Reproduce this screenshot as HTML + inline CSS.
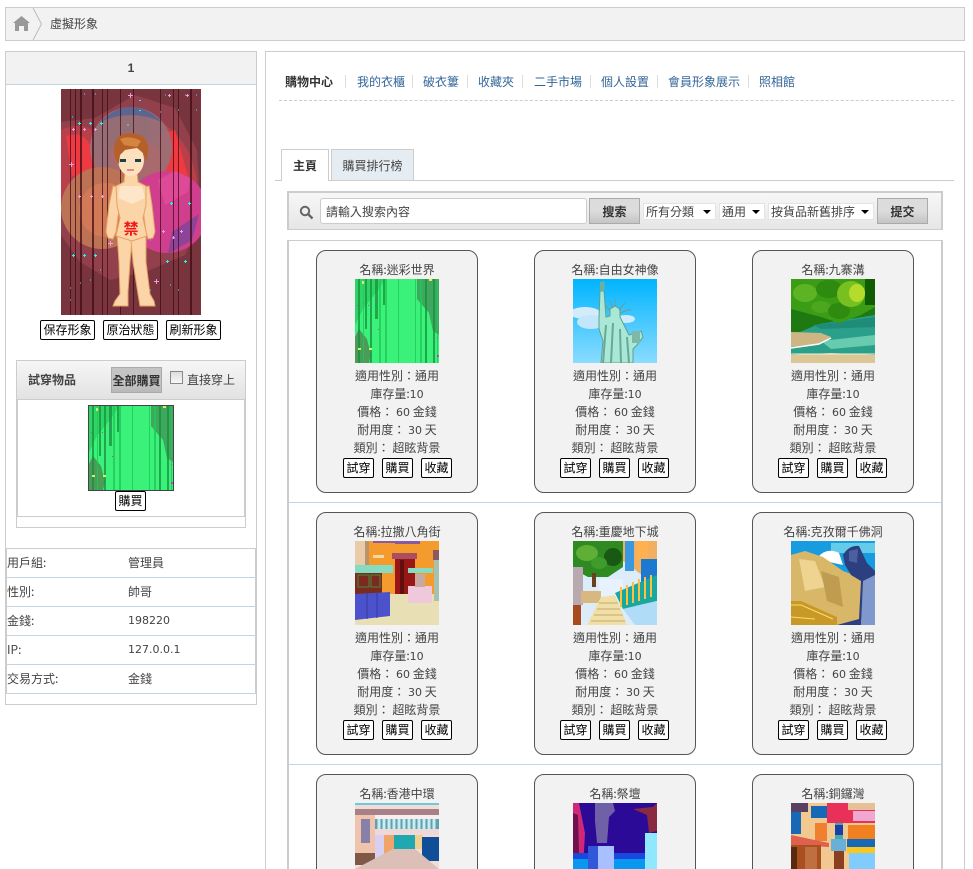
<!DOCTYPE html>
<html lang="zh-Hant">
<head>
<meta charset="utf-8">
<title>虛擬形象</title>
<style>
*{box-sizing:border-box}
html,body{margin:0;padding:0;width:973px;height:869px;overflow:hidden;background:#fff}
body{position:relative;font:12px/18px "WenQuanYi Zen Hei","Noto Sans CJK TC",sans-serif;color:#444}
.a{position:absolute}
.n{font:11px "DejaVu Sans",sans-serif}
.btn{position:absolute;height:20px;border:1px solid #000;border-radius:2px;background:#fff;color:#000;padding:0;margin:0;font:12px/18px "WenQuanYi Zen Hei","Noto Sans CJK TC",sans-serif;text-align:center;white-space:nowrap}
.gbtn{position:absolute;border:1px solid #aaa;background:linear-gradient(#dcdcdc 0,#dcdcdc 50%,#c4c4c4 100%);color:#333;font:bold 12px/23px "WenQuanYi Zen Hei","Noto Sans CJK TC",sans-serif;text-align:center;padding:0;margin:0;white-space:nowrap}
.card{position:absolute;width:162px;height:243px;border:1px solid #555;border-radius:10px;background:#f2f2f2;text-align:center;overflow:hidden}
.card .t{position:absolute;left:0;width:160px;top:10px}
.card svg{position:absolute;left:38px;top:28px;width:84px;height:84px}
.card .i{position:absolute;left:0;width:160px;top:116px}
.card .i div{height:18px}
.b1{left:26px;top:207px;width:31px}
.b2{left:65px;top:207px;width:31px}
.b3{left:104px;top:207px;width:31px}
.m .b1{left:25px}
.m .b2{left:64px}
.m .b3{left:103px}
.row{position:absolute;left:6px;width:250px;height:29px;border-bottom:1px solid #c2d5e3;line-height:28px;padding-left:1px}
.row b{position:absolute;left:122px;top:0;font-weight:normal}
.nv{position:absolute;top:73px;color:#369;white-space:nowrap}
.sep{position:absolute;top:75px;width:1px;height:13px;background:#ddd}
.sel{position:absolute;top:203px;height:17px;background:#fff;border:1px solid #e4e4e4;line-height:15px;padding-left:2px;white-space:nowrap;color:#444}
.sel i{position:absolute;right:4px;top:6px;border:4px solid transparent;border-top:4px solid #000;border-bottom:0}
.hl{position:absolute;left:289px;width:652px;height:1px;background:#c2d5e3}
</style>
</head>
<body>
<svg width="0" height="0" style="position:absolute">
<defs>
<symbol id="green" viewBox="0 0 84 84" preserveAspectRatio="none">
<rect width="84" height="84" fill="#3af27a"/>
<polygon points="62,0 84,0 84,56 78,52 74,34 62,20" fill="#3fa85e"/>
<polygon points="4,50 12,60 16,76 14,84 0,84 0,58" fill="#4a9c58"/>
<polygon points="0,0 30,0 24,10 8,30 0,46" fill="#30d466"/>
<g fill="#15903c" opacity=".75"><rect x="3" width="2" height="84"/><rect x="10" width="2" height="50"/><rect x="15" width="2" height="84"/><rect x="20" width="3" height="40"/><rect x="28" width="2" height="26"/><rect x="70" width="2" height="84"/><rect x="78" width="2" height="84"/></g>
<g fill="#22c856" opacity=".8"><rect x="8" width="1" height="84"/><rect x="24" width="2" height="84"/><rect x="30" width="2" height="84"/><rect x="43" width="1" height="84"/><rect x="60" width="1" height="84"/><rect x="65" width="2" height="84"/><rect x="82" width="1" height="84"/></g>
<g fill="#c83ac8"><rect x="2" y="26" width="1" height="1"/><rect x="13" y="26" width="1" height="1"/><rect x="16" y="45" width="1" height="1"/><rect x="22" y="20" width="1" height="2"/><rect x="15" y="53" width="1" height="1"/><rect x="2" y="56" width="1" height="1"/><rect x="23" y="50" width="1" height="1"/><rect x="82" y="76" width="2" height="2"/><rect x="82" y="52" width="1" height="1"/><rect x="82" y="58" width="1" height="1"/></g>
<g fill="#d8f060"><rect x="7" y="2" width="2" height="3"/><rect x="74" y="0" width="3" height="2"/><rect x="3" y="69" width="3" height="2"/><rect x="14" y="69" width="3" height="2"/></g>
</symbol>
</defs>
</svg>

<!-- breadcrumb -->
<div class="a" style="left:5px;top:7px;width:960px;height:34px;background:#f2f2f2;border:1px solid #ccc"></div>
<svg class="a" style="left:6px;top:8px" width="40" height="32" viewBox="0 0 40 32">
<path d="M7 15 L15.5 8 L24 15 L22 15 L22 23 L18 23 L18 18 L13 18 L13 23 L9 23 L9 15Z" fill="#999"/>
<path d="M27 0 L35.5 16 L27 32" fill="#f2f2f2" stroke="#bbb" stroke-width="1"/>
</svg>
<div class="a" style="left:50px;top:15px;color:#444">虛擬形象</div>

<!-- left panel -->
<div class="a" style="left:5px;top:51px;width:252px;height:654px;border:1px solid #ccc"></div>
<div class="a" style="left:6px;top:52px;width:250px;height:33px;background:#f2f2f2;border-bottom:1px solid #c2d5e3;text-align:center;font:bold 12px/33px 'Liberation Sans',sans-serif">1</div>

<!-- avatar -->
<svg class="a" style="left:61px;top:89px" width="140" height="226" viewBox="61 89 140 226">
<rect x="61" y="89" width="140" height="226" fill="#78353e"/>
<path d="M61 122 L95 118 L135 95 L175 108 L197 150 L201 220 L185 255 L150 270 L110 280 L80 262 L61 235Z" fill="#92414c"/>
<path d="M61 130 Q88 118 100 140 L104 175 L90 190 L61 200Z" fill="#b8404a"/>
<path d="M66 136 Q86 130 92 150 L92 178 L72 176 Z" fill="#ee3a42"/>
<path d="M150 118 Q188 130 197 180 L190 220 L165 205 L150 170Z" fill="#bb3f48"/>
<path d="M158 135 L175 130 L192 190 L175 195 L162 170Z" fill="#ee3a40"/>
<circle cx="131" cy="148" r="41" fill="#96727a" fill-opacity=".9"/>
<path d="M100 122 Q131 92 162 122 Q131 108 100 122Z" fill="#5c6490"/>
<path d="M110 150 Q131 125 160 150 L160 175 L110 180Z" fill="#a86a6c"/>
<circle cx="102" cy="208" r="41" fill="#bc7254"/>
<circle cx="106" cy="210" r="27" fill="#d27a58"/>
<circle cx="167" cy="212" r="41" fill="#cf3f8e"/>
<path d="M172 232 L199 214 L192 240 L168 254Z" fill="#8c4398"/>
<path d="M158 180 L175 171 L190 178 L188 192 L165 205Z" fill="#de4a98"/>
<g fill="#3f0a12" opacity=".72"><rect x="70" y="89" width="1" height="226"/><rect x="75" y="89" width="1" height="226"/><rect x="80" y="89" width="2" height="226"/><rect x="92" y="89" width="2" height="226"/><rect x="102" y="89" width="1" height="226"/><rect x="107" y="89" width="1" height="226"/><rect x="120" y="89" width="1" height="226"/><rect x="133" y="89" width="1" height="226"/><rect x="160" y="89" width="1" height="226"/><rect x="173" y="89" width="1" height="226"/><rect x="178" y="89" width="1" height="226"/><rect x="190" y="89" width="2" height="226"/></g>
<path d="M139 100.5h2M139 110.5h2M127 125h2M78 123.5h3M79.5 122v3M89 123.5h3M90.500 122v3M100 123.500h3M101.500 122v3M72 255.500h3M73.500 254v3M83 255.500h3M84.500 254v3M94 255.500h3M95.500 254v3M170 203.500h3M171.500 202v3M188 203.500h3M189.500 202v3M166 261.500h3M167.500 260v3M184 261.500h3M185.500 260v3" stroke="#28f4f0" stroke-width="1" fill="none"/>
<path d="M70 288h1M70 300h1M80 283h1M90 280h1M100 270h1M150 240h1M150 290h1M170 285h1M178 290h1M165 95h1M185 95h1M196 95h1M160 112h1M178 110h1M196 110h1M72 117h1M84 94h1M95 94h1" stroke="#2ef" fill="none"/>
<path d="M72 129.500h3M73.500 128v3M83 129.500h3M84.500 128v3M94 129.500h3M95.500 128v3M128 95.500h5M130.500 93v5M168 95.500h3M169.500 94v3M186 95.500h3M187.500 94v3M69 164.500h5M71.500 162v5M78 196.500h3M79.500 195v3M90 196.500h3M91.500 195v3M101 196.500h3M102.500 195v3M162 231.500h3M163.500 230v3M180 231.500h3M181.500 230v3M108 243.500h5M110.500 241v5M154 281.500h5M156.500 279v5M172 238h3M173.500 236v3" stroke="#f49ae0" fill="none"/>
<!-- figure -->
<g fill="#fbd5a8" stroke="#e6a264" stroke-width="1">
<path d="M113 186 L109 205 L106 232 L108 238 L113 239 L116 232 L120 202 L121 188Z"/>
<path d="M149 186 L152 205 L155 232 L153 238 L148 239 L146 232 L142 202 L141 188Z"/>
<path d="M117 234 L132 240 L130 262 L128 292 L128 306 L113 306 L115 301 L120 294 L119 262Z"/>
<path d="M146 234 L131 240 L133 262 L138 294 L140 306 L155 306 L154 301 L150 294 L146 262Z"/>
<path d="M125 172 L137 172 L138 182 L146 186 L146 205 L143 218 L147 236 L132 241 L116 236 L120 218 L117 205 L116 186 L124 182Z"/>
</g>
<path d="M120 186 L142 186 L145 198 L132 204 L118 198Z" fill="#fde6ca"/>
<ellipse cx="131" cy="160" rx="13" ry="16" fill="#fde0bd"/>
<path d="M114 152 Q113 133 131 133 Q149 134 148 150 L147 162 L143 153 L137 148 L125 150 L120 155 L119 164 L115 158Z" fill="#b5602a"/>
<path d="M120 139 Q130 135 141 141 L137 147 L124 145Z" fill="#d48640"/>
<rect x="120" y="159" width="6" height="3" fill="#1c3f48"/><rect x="135" y="159" width="6" height="3" fill="#1c3f48"/>
<rect x="127" y="169" width="7" height="2" fill="#e08a80"/>
<text x="131" y="234" font-size="15" font-weight="bold" fill="#f01818" text-anchor="middle" font-family="'WenQuanYi Zen Hei','Noto Sans CJK TC',sans-serif">禁</text>
</svg>
<button class="btn" style="left:40px;top:320px;width:55px">保存形象</button>
<button class="btn" style="left:103px;top:320px;width:55px">原治狀態</button>
<button class="btn" style="left:166px;top:320px;width:55px">刷新形象</button>

<!-- try-on -->
<div class="a" style="left:16px;top:360px;width:230px;height:168px;border:1px solid #ccc"></div>
<div class="a" style="left:17px;top:361px;width:228px;height:38px;background:linear-gradient(#f6f6f6,#e2e2e2)"></div>
<div class="a" style="left:28px;top:371px;font-weight:bold;color:#444">試穿物品</div>
<button class="gbtn" style="left:111px;top:367px;width:51px;height:26px;border:1px solid #aaa;background:linear-gradient(#c4c4c4 0,#c4c4c4 70%,#b8b8b8 100%)">全部購買</button>
<div class="a" style="left:170px;top:371px;width:13px;height:13px;border:1px solid #888;background:linear-gradient(#ddd,#f8f8f8)"></div>
<div class="a" style="left:187px;top:371px">直接穿上</div>
<div class="a" style="left:17px;top:399px;width:228px;height:118px;border:1px solid #ccc;background:#fff"></div>
<div class="a" style="left:88px;top:405px;width:86px;height:86px;border:1px solid #444"><svg width="84" height="84" style="display:block"><use href="#green" width="84" height="84"/></svg></div>
<button class="btn" style="left:115px;top:491px;width:31px">購買</button>

<!-- info table -->
<div class="a" style="left:5px;top:548px;width:252px;height:146px;border-left:2px solid #ccc;border-right:2px solid #ccc;border-top:1px solid #ccc"></div>
<div class="row" style="top:549px">用戶組:<b>管理員</b></div>
<div class="row" style="top:578px">性別:<b>帥哥</b></div>
<div class="row" style="top:607px">金錢:<b class="n" style="line-height:28px">198220</b></div>
<div class="row" style="top:636px">IP:<b class="n" style="line-height:28px">127.0.0.1</b></div>
<div class="row" style="top:665px">交易方式:<b>金錢</b></div>

<!-- right panel -->
<div class="a" style="left:265px;top:51px;width:700px;height:830px;border:1px solid #ccc"></div>
<div class="nv" style="left:285px;font-weight:bold;color:#333">購物中心</div>
<div class="sep" style="left:345px"></div>
<div class="nv" style="left:357px">我的衣櫃</div>
<div class="sep" style="left:412px"></div>
<div class="nv" style="left:423px">破衣簍</div>
<div class="sep" style="left:467px"></div>
<div class="nv" style="left:478px">收藏夾</div>
<div class="sep" style="left:522px"></div>
<div class="nv" style="left:534px">二手市場</div>
<div class="sep" style="left:590px"></div>
<div class="nv" style="left:601px">個人設置</div>
<div class="sep" style="left:657px"></div>
<div class="nv" style="left:668px">會員形象展示</div>
<div class="sep" style="left:748px"></div>
<div class="nv" style="left:759px">照相館</div>
<div class="a" style="left:279px;top:100px;width:675px;height:0;border-top:1px dashed #ccc"></div>

<!-- tabs -->
<div class="a" style="left:275px;top:180px;width:679px;height:1px;background:#ccc"></div>
<div class="a" style="left:281px;top:149px;width:48px;height:32px;border:1px solid #ccc;border-bottom:0;background:#fff;text-align:center;line-height:31px;font-weight:bold;color:#333">主頁</div>
<div class="a" style="left:331px;top:149px;width:83px;height:32px;border:1px solid #ccc;background:#e5edf2;text-align:center;line-height:31px;color:#444">購買排行榜</div>

<!-- search -->
<div class="a" style="left:287px;top:191px;width:656px;height:39px;border:2px solid #ccc;border-bottom:1px solid #ccc;background:linear-gradient(#f7f7f7,#e6e6e6)"></div>
<svg class="a" style="left:299px;top:205px" width="15" height="15" viewBox="0 0 15 15"><circle cx="6" cy="6" r="4.2" fill="none" stroke="#666" stroke-width="2"/><path d="M9 9 L13.5 13.5" stroke="#666" stroke-width="2.4"/></svg>
<div class="a" style="left:320px;top:198px;width:267px;height:26px;background:#fff;border:1px solid #ccc;border-radius:3px;line-height:25px;padding-left:5px;color:#444">請輸入搜索內容</div>
<button class="gbtn" style="left:589px;top:198px;width:51px;height:26px">搜索</button>
<div class="sel" style="left:643px;width:73px">所有分類<i></i></div>
<div class="sel" style="left:719px;width:46px">通用<i></i></div>
<div class="sel" style="left:768px;width:106px">按貨品新舊排序<i></i></div>
<button class="gbtn" style="left:877px;top:198px;width:51px;height:26px">提交</button>

<!-- list frame -->
<div class="a" style="left:287px;top:240px;width:656px;height:640px;border:1px solid #ccc;border-left-width:2px;border-right-width:2px"></div>
<div class="hl" style="top:502px"></div>
<div class="hl" style="top:764px"></div>

<!-- row 1 -->
<div class="card" style="left:316px;top:250px">
<div class="t">名稱:迷彩世界</div>
<svg viewBox="0 0 84 84"><use href="#green" width="84" height="84"/></svg>
<div class="i"><div>適用性別：通用</div><div>庫存量:<span class="n">10</span></div><div>價格： <span class="n">60</span> 金錢</div><div>耐用度： <span class="n">30</span> 天</div><div>類別： 超眩背景</div></div>
<button class="btn b1">試穿</button><button class="btn b2">購買</button><button class="btn b3">收藏</button>
</div>
<div class="card m" style="left:534px;top:250px">
<div class="t">名稱:自由女神像</div>
<svg viewBox="0 0 84 84"><defs><linearGradient id="sky" x1="0" y1="0" x2="0" y2="1"><stop offset="0" stop-color="#00b4ff"/><stop offset="1" stop-color="#8adcff"/></linearGradient></defs><rect width="84" height="84" fill="url(#sky)"/>
<ellipse cx="12" cy="34" rx="15" ry="6" fill="#d2ecfc"/><ellipse cx="18" cy="43" rx="14" ry="7" fill="#c4e6fa"/><ellipse cx="53" cy="40" rx="9" ry="4" fill="#cfeafc"/>
<path d="M27 12 L31 12 L33 38 L37 37 L37 30 L42 27 L47 30 L47 38 L50 44 L56 56 L68 52 L70 58 L64 66 L60 70 L60 84 L28 84 L30 62 L26 50 L26 40Z" fill="#a9e8d6" stroke="#5f9f8e"/>
<path d="M27 3 L31 2 L32 7 L31 12 L27 12Z" fill="#6eb09a"/>
<path d="M37 22 L40 29 M32 25 L37 32 M52 24 L46 31 M58 30 L47 34 M42 20 L42 27" stroke="#6ba090" stroke-width="1"/>
<path d="M33 46 L30 84 M40 44 L38 84 M47 50 L48 84 M54 58 L56 84" stroke="#6aa896" stroke-width="2"/>
<rect x="59" y="52" width="8" height="12" fill="#7fb8a6"/></svg>
<div class="i"><div>適用性別：通用</div><div>庫存量:<span class="n">10</span></div><div>價格： <span class="n">60</span> 金錢</div><div>耐用度： <span class="n">30</span> 天</div><div>類別： 超眩背景</div></div>
<button class="btn b1">試穿</button><button class="btn b2">購買</button><button class="btn b3">收藏</button>
</div>
<div class="card m" style="left:752px;top:250px">
<div class="t">名稱:九寨溝</div>
<svg viewBox="0 0 84 84"><rect width="84" height="84" fill="#2aa58c"/>
<rect width="84" height="53" fill="#1e7a10"/>
<path d="M9 53 L28 45 L84 36 L84 76 L0 76 L0 68 L40 62Z" fill="#2aa08a"/>
<path d="M22 46 L84 38 L84 48 L30 50Z" fill="#1f8c78"/>
<path d="M30 62 L84 56 L84 66 L40 70Z" fill="#68cbae"/>
<path d="M0 0 L84 0 L84 28 L70 36 L48 44 L30 38 L15 34 L0 30Z" fill="#3b9c16"/>
<ellipse cx="14" cy="14" rx="12" ry="9" fill="#5cb424"/><ellipse cx="38" cy="10" rx="13" ry="9" fill="#2f8a10"/><ellipse cx="30" cy="28" rx="10" ry="6" fill="#4ca61e"/><ellipse cx="48" cy="32" rx="11" ry="8" fill="#2f8a10"/><ellipse cx="60" cy="15" rx="14" ry="13" fill="#78c020"/>
<ellipse cx="66" cy="14" rx="8" ry="9" fill="#b4dc2c"/>
<rect x="74" width="10" height="26" fill="#0f5c02"/>
<path d="M0 53 L30 54 L40 58 L28 65 L0 68Z" fill="#cdb684"/>
<path d="M0 76 L40 74 L84 76 L84 84 L0 84Z" fill="#dbc794"/>
<path d="M0 69 L28 65 L40 59" stroke="#fff" stroke-width="1.5" fill="none"/>
<path d="M0 75 L84 75" stroke="#f2f0e0" stroke-width="1"/></svg>
<div class="i"><div>適用性別：通用</div><div>庫存量:<span class="n">10</span></div><div>價格： <span class="n">60</span> 金錢</div><div>耐用度： <span class="n">30</span> 天</div><div>類別： 超眩背景</div></div>
<button class="btn b1">試穿</button><button class="btn b2">購買</button><button class="btn b3">收藏</button>
</div>

<!-- row 2 -->
<div class="card" style="left:316px;top:512px">
<div class="t">名稱:拉撒八角街</div>
<svg viewBox="0 0 84 84"><rect width="84" height="84" fill="#f59a2c"/>
<rect width="14" height="24" fill="#eacba8"/>
<rect x="10" width="4" height="24" fill="#b89468"/>
<rect y="24" width="38" height="8" fill="#86dcc0"/>
<rect y="32" width="27" height="21" fill="#7a2a1e"/>
<path d="M3 34 H14 V46 H3Z M16 34 H25 V46 H16Z" fill="none" stroke="#4a8a3a"/>
<rect x="37" y="12" width="25" height="6" fill="#a85060"/>
<rect x="40" y="18" width="20" height="35" fill="#991616"/>
<rect x="45" y="19" width="4" height="34" fill="#600e0e"/>
<rect x="18" y="14" width="11" height="3" fill="#f2d8a8"/>
<rect x="18" y="0" width="22" height="2" fill="#8a5aa0"/><rect x="40" y="0" width="25" height="3" fill="#8a5aa0"/>
<rect y="53" width="84" height="31" fill="#e8dfb4"/>
<path d="M0 53 L35 51 L35 75 L0 79Z" fill="#4c52cc"/>
<path d="M12 52 V78 M22 52 V77" stroke="#353aa0"/>
<rect x="53" y="27" width="25" height="5" fill="#86dcc0"/>
<rect x="53" y="45" width="24" height="17" fill="#f0c8dc"/>
<rect x="60" y="33" width="10" height="13" fill="#c8a8a0"/>
<rect x="79" y="19" width="5" height="41" fill="#a8c0b0"/>
<rect x="78" y="9" width="6" height="10" fill="#8a5a60"/></svg>
<div class="i"><div>適用性別：通用</div><div>庫存量:<span class="n">10</span></div><div>價格： <span class="n">60</span> 金錢</div><div>耐用度： <span class="n">30</span> 天</div><div>類別： 超眩背景</div></div>
<button class="btn b1">試穿</button><button class="btn b2">購買</button><button class="btn b3">收藏</button>
</div>
<div class="card m" style="left:534px;top:512px">
<div class="t">名稱:重慶地下城</div>
<svg viewBox="0 0 84 84"><rect width="84" height="84" fill="#dcecf8"/>
<path d="M50 0 H84 V45 L50 20Z" fill="#f0b060"/>
<rect x="52" width="9" height="30" fill="#3a98e0"/>
<rect x="68" y="18" width="16" height="26" fill="#1d78d0"/>
<rect x="64" width="11" height="18" fill="#ffb050"/>
<path d="M0 0 H50 L50 26 L35 36 L15 36 L0 28Z" fill="#2f8a22"/>
<ellipse cx="14" cy="12" rx="11" ry="8" fill="#5fae36"/><ellipse cx="40" cy="16" rx="9" ry="9" fill="#185a14"/><ellipse cx="26" cy="22" rx="8" ry="6" fill="#3d9c2c"/>
<rect x="19" y="32" width="4" height="14" fill="#6a4020"/>
<rect y="26" width="10" height="38" fill="#b8a8b0"/>
<rect y="64" width="8" height="20" fill="#a84a20"/>
<rect x="26" y="38" width="24" height="18" fill="#e8f2ff"/>
<rect x="8" y="50" width="20" height="12" fill="#d8b880"/>
<path d="M28 56 L42 54 L54 84 L14 84Z" fill="#f0e0a8"/>
<path d="M26 62 H45 M24 68 H47 M21 74 H50 M18 80 H52" stroke="#c8a868"/>
<path d="M42 52 L84 34 L84 60 L50 68Z" fill="#18a8a0"/>
<path d="M48 46 V66 M54 44 V64 M60 41 V62 M66 38 V60 M72 36 V58 M78 34 V56" stroke="#ffc040" stroke-width="2"/>
<path d="M50 68 L84 60 L84 84 L62 84Z" fill="#b0dcf8"/></svg>
<div class="i"><div>適用性別：通用</div><div>庫存量:<span class="n">10</span></div><div>價格： <span class="n">60</span> 金錢</div><div>耐用度： <span class="n">30</span> 天</div><div>類別： 超眩背景</div></div>
<button class="btn b1">試穿</button><button class="btn b2">購買</button><button class="btn b3">收藏</button>
</div>
<div class="card m" style="left:752px;top:512px">
<div class="t">名稱:克孜爾千佛洞</div>
<svg viewBox="0 0 84 84"><rect width="84" height="84" fill="#189ce0"/>
<rect x="40" y="2" width="44" height="10" fill="#64cce8"/>
<path d="M27 16 Q36 6 48 12 L52 24 L34 20Z" fill="#fff"/>
<path d="M0 14 L14 10 L32 16 L52 30 L74 38 L72 84 L0 84Z" fill="#d8b868"/>
<path d="M8 18 L24 20 L34 46 L14 50Z" fill="#eed490"/>
<path d="M30 30 L48 36 L52 66 L36 60Z" fill="#c09c50"/>
<path d="M0 60 L10 60 L46 76 L46 84 L0 84Z" fill="#c89828"/>
<path d="M0 64 L10 64 L42 78 M0 76 L24 78" stroke="#f8e060" fill="none"/>
<path d="M52 14 Q58 4 68 5 L76 22 L84 30 L84 50 L72 52 L70 84 L46 84 L68 78 L70 40 L60 34 L54 24Z" fill="#2c3f80"/>
<path d="M72 40 L84 34 L84 84 L70 84Z" fill="#8098cc"/>
<path d="M58 10 L67 8 L66 22 L58 20Z" fill="#4a60a0"/></svg>
<div class="i"><div>適用性別：通用</div><div>庫存量:<span class="n">10</span></div><div>價格： <span class="n">60</span> 金錢</div><div>耐用度： <span class="n">30</span> 天</div><div>類別： 超眩背景</div></div>
<button class="btn b1">試穿</button><button class="btn b2">購買</button><button class="btn b3">收藏</button>
</div>

<!-- row 3 -->
<div class="card" style="left:316px;top:774px">
<div class="t">名稱:香港中環</div>
<svg viewBox="0 0 84 84"><rect width="84" height="84" fill="#f2dcd8"/>
<rect width="84" height="2" fill="#70c8d8"/>
<rect y="6" width="84" height="6" fill="#a88088"/>
<rect x="20" y="12" width="64" height="4" fill="#f8ecec"/>
<rect x="20" y="16" width="64" height="10" fill="#60a0b0"/>
<path d="M24 16 V26 M29 16 V26 M34 16 V26 M39 16 V26 M44 16 V26 M49 16 V26 M54 16 V26 M59 16 V26 M64 16 V26 M69 16 V26 M74 16 V26 M79 16 V26" stroke="#c8ecf0" stroke-width="3"/>
<rect y="12" width="20" height="46" fill="#f0c4ac"/>
<rect x="6" y="16" width="9" height="24" fill="#8880a8"/>
<rect y="50" width="20" height="12" fill="#805848"/>
<rect x="20" y="26" width="64" height="6" fill="#eed8d8"/>
<rect x="20" y="32" width="10" height="30" fill="#d8d0f0"/>
<rect x="29" y="32" width="10" height="20" fill="#f0a468"/>
<rect x="39" y="32" width="21" height="14" fill="#20a8b0"/>
<rect x="60" y="32" width="8" height="14" fill="#f0d090"/>
<rect x="67" y="34" width="17" height="24" fill="#104e98"/>
<path d="M0 66 L38 46 L60 46 L84 66 L84 84 L0 84Z" fill="#dcc0b8"/></svg>
</div>
<div class="card m" style="left:534px;top:774px">
<div class="t">名稱:祭壇</div>
<svg viewBox="0 0 84 84"><rect width="84" height="84" fill="#2a0a96"/>
<path d="M0 0 L6 0 L12 30 L10 66 L0 66Z" fill="#d02878"/>
<path d="M0 10 L5 12 L6 50 L0 50Z" fill="#70104a"/>
<path d="M22 0 L40 0 L42 8 L36 14 L34 40 L24 40 L22 18Z" fill="#7060a8"/>
<path d="M60 6 L80 4 L84 0 L84 28 L76 30 L74 12Z" fill="#8a2a40"/>
<rect y="50" width="84" height="6" fill="#1848e0"/>
<rect y="56" width="84" height="14" fill="#0898f0"/>
<rect x="72" y="30" width="12" height="36" fill="#90e8ff"/>
<rect x="15" y="43" width="26" height="30" fill="#a8c0ff"/>
<rect x="15" y="43" width="10" height="30" fill="#3058d8"/></svg>
</div>
<div class="card m" style="left:752px;top:774px">
<div class="t">名稱:銅鑼灣</div>
<svg viewBox="0 0 84 84"><rect width="84" height="84" fill="#f0c890"/>
<rect width="17" height="9" fill="#5a4060"/>
<rect y="9" width="10" height="22" fill="#1868b8"/>
<rect x="20" y="3" width="16" height="12" fill="#1868b8"/>
<rect x="36" width="48" height="20" fill="#e83058"/>
<rect x="57" width="27" height="7" fill="#e8c098"/>
<rect x="62" y="8" width="22" height="10" fill="#f0a8d0"/>
<rect x="57" y="22" width="27" height="14" fill="#f08020"/>
<rect x="56" y="36" width="28" height="8" fill="#1868b8"/>
<rect x="56" y="44" width="28" height="6" fill="#f8c820"/>
<rect x="58" y="50" width="26" height="16" fill="#80ccff"/>
<rect x="44" y="20" width="8" height="46" fill="#48a8a8"/>
<rect x="44" y="22" width="8" height="10" fill="#1840a8"/>
<rect x="40" y="36" width="15" height="12" fill="#68b0d8"/>
<rect x="24" y="20" width="12" height="18" fill="#f08030"/>
<path d="M0 32 L38 40 L38 44 L0 42Z" fill="#e06050"/>
<rect y="42" width="30" height="24" fill="#a85020"/>
<rect y="44" width="6" height="22" fill="#5a2a10"/>
<rect x="14" y="44" width="12" height="22" fill="#c07040"/>
<rect x="43" y="48" width="10" height="18" fill="#8a4020"/></svg>
</div>
</body>
</html>
